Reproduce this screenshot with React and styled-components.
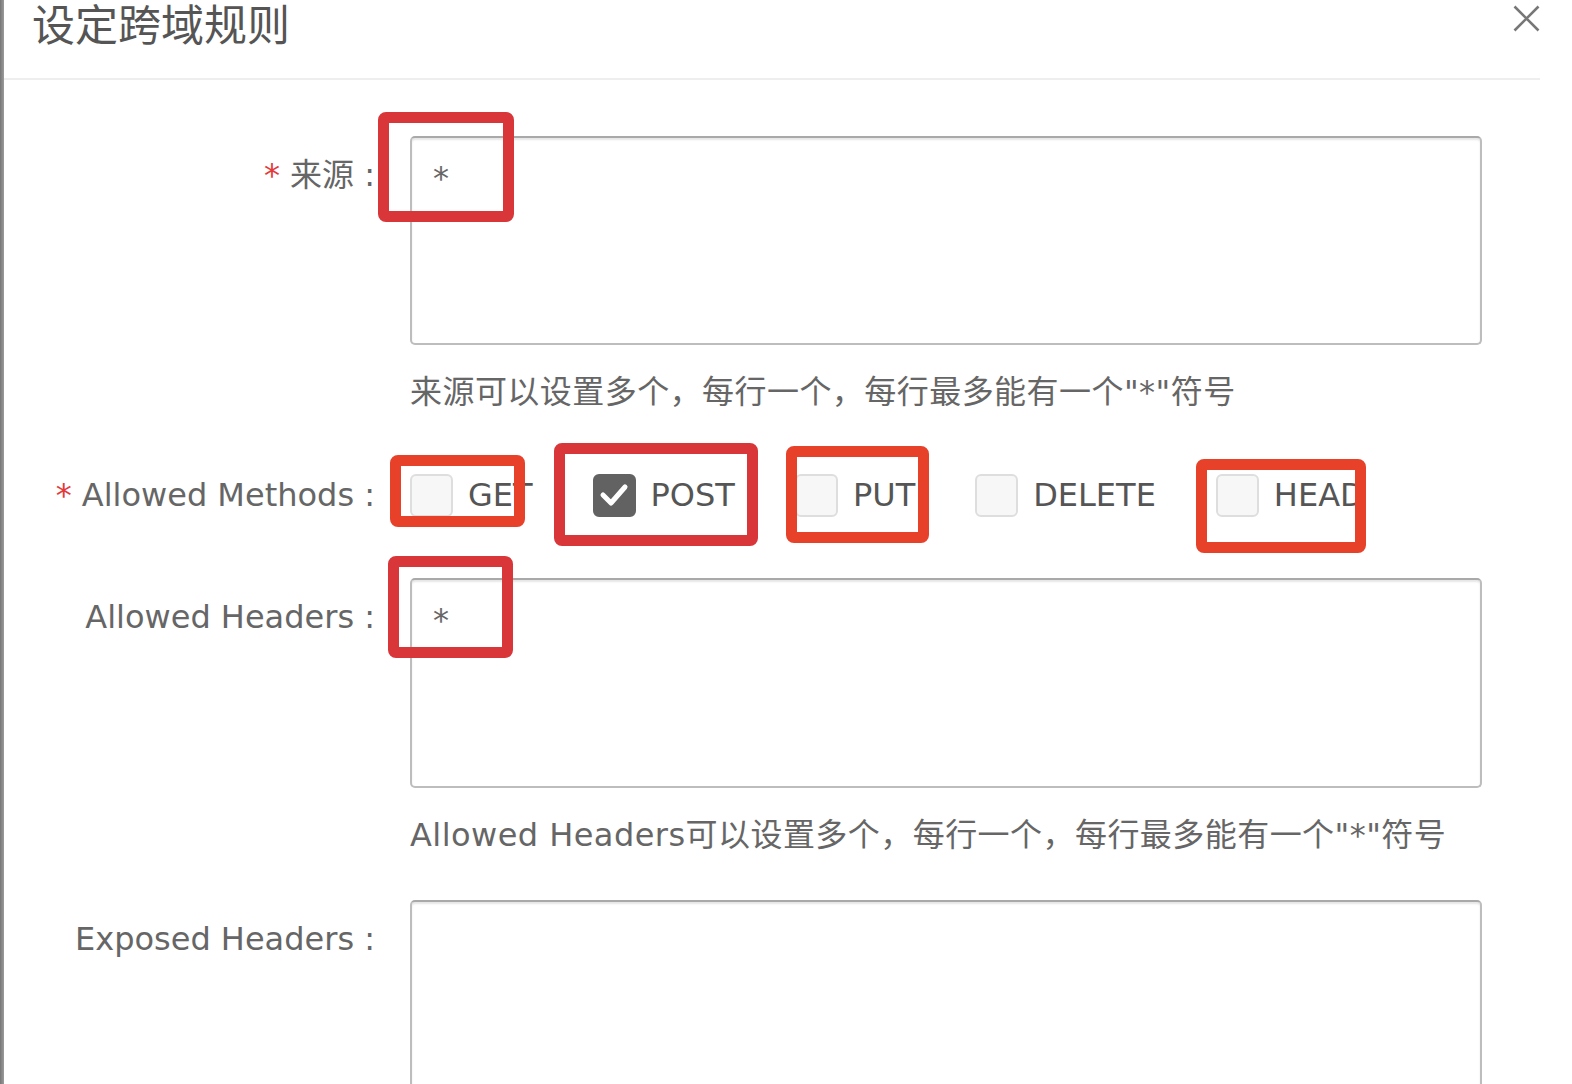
import React from 'react';
import styled, { createGlobalStyle } from 'styled-components';

const Global = createGlobalStyle`
  html, body { margin: 0; padding: 0; background: #fff; overflow: hidden; }
  body { font-family: "DejaVu Sans", "Noto Sans CJK SC", sans-serif; }
  * { box-sizing: border-box; }
`;

const Page = styled.div`
  position: relative;
  display: flex;
  width: 1572px;
  height: 1084px;
  overflow: hidden;
  background: #fff;
`;

const SideEdge = styled.div`
  flex: none;
  width: 4px;
  background: linear-gradient(to right, #767676, #9c9c9c);
`;

const Dialog = styled.div`
  flex: none;
  width: 1536px;
  display: flex;
  flex-direction: column;
`;

const Header = styled.header`
  flex: none;
  display: flex;
  justify-content: space-between;
  align-items: flex-start;
  height: 80px;
  padding: 0 0 0 28px;
  border-bottom: 2px solid #eeeeee;
`;

const Title = styled.h1`
  margin: 0;
  font-family: "Noto Sans CJK SC", sans-serif;
  font-weight: 400;
  font-size: 43px;
  line-height: 44px;
  color: #555;
`;

const CloseButton = styled.button`
  margin-top: 5px;
  padding: 0;
  border: 0;
  background: none;
  width: 27px;
  height: 27px;
  display: flex;
`;

const Body = styled.div`
  flex: none;
  padding-top: 56px;
`;

const Item = styled.div`
  display: grid;
  grid-template-columns: 371px 1072px;
  column-gap: 35px;
  align-items: ${p => (p.$center ? 'center' : 'start')};
  margin-bottom: ${p => p.$gap}px;
`;

const Label = styled.label`
  text-align: right;
  white-space: nowrap;
  font-size: 32px;
  line-height: 40px;
  color: #666;
  padding-top: ${p => p.$top || 0}px;
`;

const Required = styled.span`
  color: #e4393c;
  margin-right: 10px;
`;

const Control = styled.div`
  display: flex;
  flex-direction: column;
`;

const Area = styled.textarea`
  display: block;
  width: 1072px;
  height: ${p => p.$h}px;
  resize: none;
  margin: 0;
  padding: 20px 21px;
  border: 2px solid #bdbdbd;
  border-top-color: #a9a9a9;
  border-radius: 5px;
  box-shadow: inset 0 2px 2px rgba(0, 0, 0, 0.1);
  font-family: "DejaVu Sans", "Noto Sans CJK SC", sans-serif;
  font-size: 32px;
  line-height: 40px;
  color: #666;
  background: #fff;
  outline: none;
`;

const Help = styled.div`
  margin-top: 27px;
  font-size: 32px;
  line-height: 40px;
  letter-spacing: 0.45px;
  color: #666;
  white-space: nowrap;
`;

const Methods = styled.div`
  display: flex;
  align-items: center;
  height: 44px;
  gap: 60px;
`;

const Option = styled.label`
  display: flex;
  align-items: center;
  gap: 15px;
  font-size: 32px;
  line-height: 40px;
  color: #555;
`;

const Box = styled.span`
  width: 43px;
  height: 43px;
  border-radius: 6px;
  border: 2px solid ${p => (p.$checked ? '#626262' : '#dedede')};
  background: ${p => (p.$checked ? '#626262' : '#f7f7f7')};
  display: flex;
  align-items: center;
  justify-content: center;
`;

const Mark = styled.div`
  position: absolute;
  left: ${p => p.$x}px;
  top: ${p => p.$y}px;
  width: ${p => p.$w}px;
  height: ${p => p.$h}px;
  border: 11px solid ${p => p.$c};
  border-radius: 8px;
  pointer-events: none;
`;

const RED = '#d9363a';
const ORANGE = '#e8412a';

const Check = () => (
  <svg width="30" height="26" viewBox="0 0 30 26">
    <polyline points="4,13 12,21 26,5" fill="none" stroke="#fff" strokeWidth="5" strokeLinecap="round" strokeLinejoin="round" />
  </svg>
);

const methods = [
  { name: 'GET', checked: false },
  { name: 'POST', checked: true },
  { name: 'PUT', checked: false },
  { name: 'DELETE', checked: false },
  { name: 'HEAD', checked: false },
];

export default function App() {
  return (
    <>
      <Global />
      <Page>
        <SideEdge />
        <Dialog>
          <Header>
            <Title>设定跨域规则</Title>
            <CloseButton aria-label="关闭">
              <svg width="27" height="27" viewBox="0 0 27 27">
                <path d="M1.5 1.5 L25.5 25.5 M25.5 1.5 L1.5 25.5" stroke="#777" strokeWidth="2.6" fill="none" />
              </svg>
            </CloseButton>
          </Header>
          <Body>
            <Item $gap={61}>
              <Label $top={19}><Required>*</Required>来源 :</Label>
              <Control>
                <Area $h={209} defaultValue="*" />
                <Help>来源可以设置多个，每行一个，每行最多能有一个"*"符号</Help>
              </Control>
            </Item>
            <Item $gap={61} $center>
              <Label><Required>*</Required>Allowed Methods :</Label>
              <Methods>
                {methods.map(m => (
                  <Option key={m.name}>
                    <Box $checked={m.checked}>{m.checked && <Check />}</Box>
                    {m.name}
                  </Option>
                ))}
              </Methods>
            </Item>
            <Item $gap={45}>
              <Label $top={19}>Allowed Headers :</Label>
              <Control>
                <Area $h={210} defaultValue="*" />
                <Help>Allowed Headers可以设置多个，每行一个，每行最多能有一个"*"符号</Help>
              </Control>
            </Item>
            <Item $gap={0}>
              <Label $top={19}>Exposed Headers :</Label>
              <Control>
                <Area $h={210} defaultValue="" />
              </Control>
            </Item>
          </Body>
        </Dialog>
        <Mark $c={RED} $x={378} $y={112} $w={136} $h={110} />
        <Mark $c={ORANGE} $x={390} $y={455} $w={135} $h={72} />
        <Mark $c={RED} $x={554} $y={443} $w={204} $h={103} />
        <Mark $c={ORANGE} $x={786} $y={446} $w={143} $h={97} />
        <Mark $c={ORANGE} $x={1196} $y={459} $w={170} $h={94} />
        <Mark $c={RED} $x={388} $y={556} $w={125} $h={102} />
      </Page>
    </>
  );
}
